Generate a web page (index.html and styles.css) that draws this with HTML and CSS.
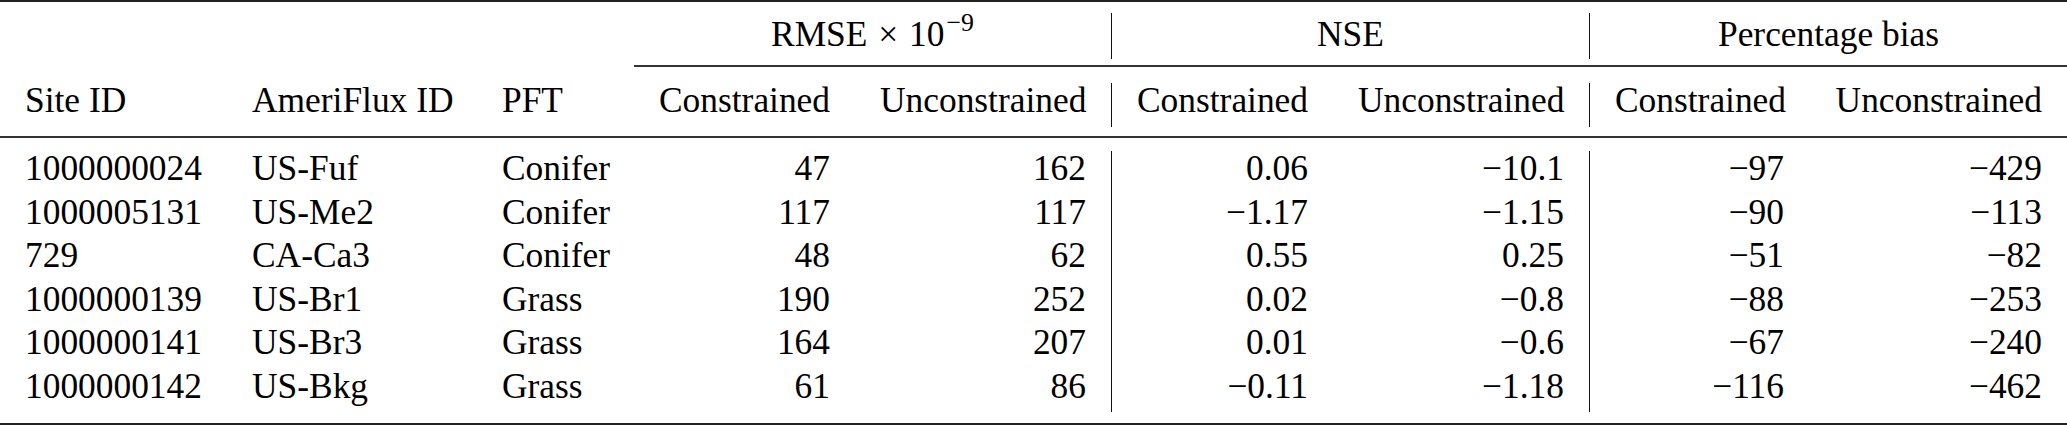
FILE: index.html
```html
<!DOCTYPE html>
<html lang="en">
<head>
    <meta charset="UTF-8">
    <meta name="viewport" content="width=device-width, initial-scale=1.0">
    <title>Model skill per site</title>
    <link rel="stylesheet" href="styles.css">
</head>
<body>
    <table class="results">
        <colgroup>
            <col class="c-site">
            <col class="c-flux">
            <col class="c-pft">
            <col class="c-con">
            <col class="c-unc">
            <col class="c-con2">
            <col class="c-unc">
            <col class="c-con3">
            <col class="c-unc-last">
        </colgroup>
        <thead>
            <tr class="rule heavy"><td colspan="9"></td></tr>
            <tr class="gap gap-top"><td colspan="9"></td></tr>
            <tr class="head-group">
                <td colspan="3"></td>
                <td colspan="2" class="center">RMSE <span class="times">&times;</span> 10<sup>&minus;9</sup></td>
                <td colspan="2" class="center bar">NSE</td>
                <td colspan="2" class="center bar">Percentage bias</td>
            </tr>
            <tr class="gap gap-cmid"><td colspan="9"></td></tr>
            <tr class="rule thin"><td colspan="3" class="blank"></td><td colspan="6"></td></tr>
            <tr class="gap gap-head"><td colspan="9"></td></tr>
            <tr class="head-cols">
                <th>Site ID</th>
                <th>AmeriFlux ID</th>
                <th>PFT</th>
                <th class="num">Constrained</th>
                <th class="num">Unconstrained</th>
                <th class="num bar">Constrained</th>
                <th class="num">Unconstrained</th>
                <th class="num bar">Constrained</th>
                <th class="num">Unconstrained</th>
            </tr>
            <tr class="gap gap-mid"><td colspan="9"></td></tr>
            <tr class="rule thin"><td colspan="9"></td></tr>
            <tr class="gap gap-body"><td colspan="9"></td></tr>
        </thead>
        <tbody>
            <tr class="data">
                <td>1000000024</td><td>US-Fuf</td><td>Conifer</td>
                <td class="num">47</td><td class="num">162</td>
                <td class="num bar">0.06</td><td class="num">&minus;10.1</td>
                <td class="num bar">&minus;97</td><td class="num">&minus;429</td>
            </tr>
            <tr class="data">
                <td>1000005131</td><td>US-Me2</td><td>Conifer</td>
                <td class="num">117</td><td class="num">117</td>
                <td class="num bar">&minus;1.17</td><td class="num">&minus;1.15</td>
                <td class="num bar">&minus;90</td><td class="num">&minus;113</td>
            </tr>
            <tr class="data">
                <td>729</td><td>CA-Ca3</td><td>Conifer</td>
                <td class="num">48</td><td class="num">62</td>
                <td class="num bar">0.55</td><td class="num">0.25</td>
                <td class="num bar">&minus;51</td><td class="num">&minus;82</td>
            </tr>
            <tr class="data">
                <td>1000000139</td><td>US-Br1</td><td>Grass</td>
                <td class="num">190</td><td class="num">252</td>
                <td class="num bar">0.02</td><td class="num">&minus;0.8</td>
                <td class="num bar">&minus;88</td><td class="num">&minus;253</td>
            </tr>
            <tr class="data">
                <td>1000000141</td><td>US-Br3</td><td>Grass</td>
                <td class="num">164</td><td class="num">207</td>
                <td class="num bar">0.01</td><td class="num">&minus;0.6</td>
                <td class="num bar">&minus;67</td><td class="num">&minus;240</td>
            </tr>
            <tr class="data">
                <td>1000000142</td><td>US-Bkg</td><td>Grass</td>
                <td class="num">61</td><td class="num">86</td>
                <td class="num bar">&minus;0.11</td><td class="num">&minus;1.18</td>
                <td class="num bar">&minus;116</td><td class="num">&minus;462</td>
            </tr>
            <tr class="gap gap-end"><td colspan="9"></td></tr>
            <tr class="rule heavy"><td colspan="9"></td></tr>
        </tbody>
    </table>
</body>
</html>
```

FILE: styles.css
```css
body {
    margin: 0;
    padding: 0;
    background: #fff;
    color: #000;
    font-family: "Liberation Serif", "Times New Roman", serif;
}
.results {
    width: 2067px;
    table-layout: fixed;
    border-collapse: separate;
    border-spacing: 0;
    font-size: 35.4px;
}
.c-site { width: 227px; }
.c-flux { width: 250px; }
.c-pft { width: 157px; }
.c-con { width: 221px; }
.c-unc { width: 256px; }
.c-con2 { width: 222px; }
.c-con3 { width: 220px; }
.c-unc-last { width: 258px; }
.results td,
.results th {
    padding: 0 25px;
    font-weight: normal;
    text-align: left;
    white-space: nowrap;
    vertical-align: top;
}
.results .num {
    text-align: right;
}
.results .center {
    text-align: center;
}
.results .bar {
    border-left: 1px solid #111;
}
/* booktabs style rules */
.rule td {
    padding: 0;
    font-size: 0;
    line-height: 0;
    background: #333;
}
.rule.heavy td {
    height: 2px;
    background: #222;
}
.rule.thin td {
    height: 2px;
}
.rule td.blank {
    background: none;
}
.gap td {
    padding: 0;
    font-size: 0;
    line-height: 0;
}
.gap-top td { height: 11px; }
.gap-cmid td { height: 6px; }
.gap-head td { height: 16px; }
.gap-mid td { height: 9.5px; }
.gap-body td { height: 13px; }
.gap-end td { height: 11px; }
.head-group td {
    line-height: 42px;
    padding-bottom: 4px;
}
.head-group .times {
    margin: 0 2px;
}
.head-group sup {
    font-size: 0.73em;
    line-height: 0;
    margin-left: 2px;
    vertical-align: 15px;
}
.head-cols th,
.data td {
    line-height: 34px;
    padding-bottom: 9.5px;
}
```
